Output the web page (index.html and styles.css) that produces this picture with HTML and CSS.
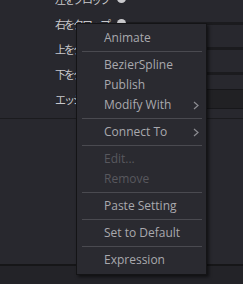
FILE: index.html
```html
<!DOCTYPE html>
<html lang="ja">
<head>
  <meta charset="UTF-8" />
  <meta name="viewport" content="width=device-width, initial-scale=1.0"/>
  <title>Crop</title>
  <link rel="stylesheet" href="styles.css">
</head>
<body>
  <!-- Inspector rows behind the menu -->
  <div class="inspector">
    <div class="row">
      <span class="label">左をクロップ</span>
      <div class="slider"><span class="knob"></span><span class="track"></span></div>
    </div>
    <div class="row">
      <span class="label">右をクロップ</span>
      <div class="slider"><span class="knob"></span><span class="track"></span></div>
    </div>
    <div class="row">
      <span class="label">上をクロップ</span>
      <div class="slider"><span class="knob"></span><span class="track"></span></div>
    </div>
    <div class="row">
      <span class="label">下をクロップ</span>
      <div class="slider"><span class="knob"></span><span class="track"></span></div>
    </div>
    <div class="row">
      <span class="label">エッジぼかし</span>
      <div class="field"></div>
    </div>
  </div>
  <div class="spacer"></div>
  <div class="footer"></div>

  <!-- Context menu -->
  <ul class="menu">
    <li class="item">Animate</li>
    <li class="sep"></li>
    <li class="item">BezierSpline</li>
    <li class="item">Publish</li>
    <li class="item">Modify With
      <svg class="chevron" width="6" height="9" viewBox="0 0 6 9"><polyline points="1,1 5,4.5 1,8" fill="none" stroke="#8c8c91" stroke-width="1.2"/></svg>
    </li>
    <li class="sep"></li>
    <li class="item">Connect To
      <svg class="chevron" width="6" height="9" viewBox="0 0 6 9"><polyline points="1,1 5,4.5 1,8" fill="none" stroke="#8c8c91" stroke-width="1.2"/></svg>
    </li>
    <li class="sep"></li>
    <li class="item disabled">Edit...</li>
    <li class="item disabled">Remove</li>
    <li class="sep"></li>
    <li class="item">Paste Setting</li>
    <li class="sep"></li>
    <li class="item">Set to Default</li>
    <li class="sep"></li>
    <li class="item">Expression</li>
  </ul>
</body>
</html>
```

FILE: styles.css
```css
/* Page */
body {
  margin: 0;
  height: 284px;
  overflow: hidden;
  background-color: #28282e;
  position: relative;
}

/* Inspector rows */
.inspector {
  margin-top: -14px;
  padding-bottom: 7px;
  border-bottom: 1px solid #1b1b1e;
}

.row {
  height: 25px;
  display: grid;
  grid-template-columns: 109px 1fr;
  column-gap: 8px;
  align-items: center;
}

.label {
  text-align: right;
  font-family: "Noto Sans CJK JP", sans-serif;
  font-size: 11px;
  letter-spacing: -2px;
  color: #c8c8cc;
  white-space: nowrap;
}

.slider {
  display: flex;
  align-items: center;
}

.knob {
  width: 9px;
  height: 9px;
  border-radius: 50%;
  background-color: #c9c9cc;
  flex: none;
}

.track {
  flex: 1;
  height: 3px;
  background-color: #1b1b1e;
}

.field {
  height: 18px;
  border-top: 1px solid #17171a;
  border-bottom: 1px solid #17171a;
  background-color: #212124;
}

.spacer {
  height: 145px;
  border-bottom: 2px solid #161618;
}

.footer {
  height: 30px;
  background-color: #232328;
}

/* Context menu */
.menu {
  position: absolute;
  left: 76px;
  top: 23px;
  width: 131px;
  box-sizing: border-box;
  margin: 0;
  padding: 4px 0;
  list-style: none;
  background-color: #2a2a30;
  border: 1px solid #141416;
  box-shadow: 2px 2px 3px rgba(0, 0, 0, 0.55);
  font-family: "Open Sans", sans-serif;
  font-size: 12px;
}

.item {
  position: relative;
  height: 20px;
  line-height: 20px;
  padding-left: 27px;
  color: #a9a9ae;
}

.item.disabled {
  color: #58585e;
}

.chevron {
  position: absolute;
  right: 7px;
  top: 6px;
}

.sep {
  height: 1px;
  margin: 3px 4px 3px 5px;
  background-color: #4a4a50;
}
```
